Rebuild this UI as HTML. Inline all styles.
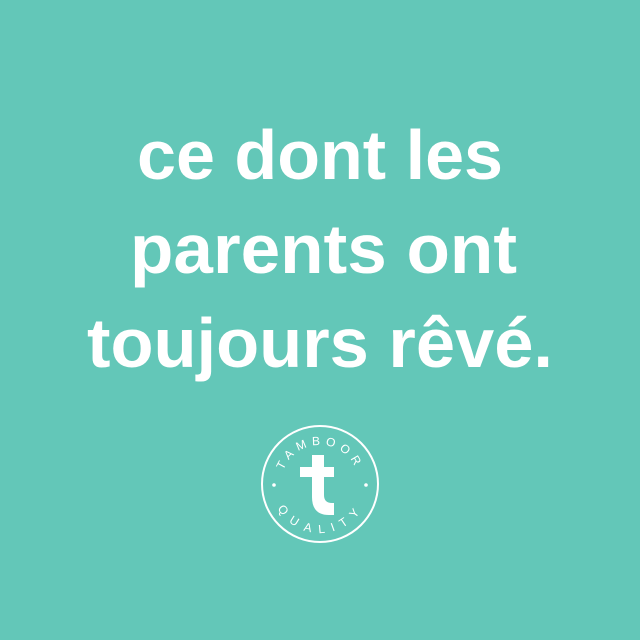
<!DOCTYPE html>
<html><head><meta charset="utf-8"><style>
html,body{margin:0;padding:0;background:#63c7b8;}
svg{display:block}
</style></head><body>
<svg width="640" height="640" viewBox="0 0 640 640" xmlns="http://www.w3.org/2000/svg">
<rect width="640" height="640" fill="#63c7b8"/>
<g fill="#fff" font-family="Liberation Sans, sans-serif" font-weight="bold" font-size="70">
<text x="137" y="179" textLength="366" lengthAdjust="spacingAndGlyphs">ce dont les</text>
<text x="130" y="273" textLength="387" lengthAdjust="spacingAndGlyphs">parents ont</text>
<text x="87" y="367" textLength="466" lengthAdjust="spacingAndGlyphs">toujours rêvé.</text>
</g>
<circle cx="320" cy="484" r="58" fill="none" stroke="#fff" stroke-width="2"/>
<circle cx="274" cy="485" r="1.8" fill="#fff"/>
<circle cx="366" cy="485" r="1.8" fill="#fff"/>
<defs>
<path id="top" d="M281,484 A39,39 0 0 1 359,484"/>
<path id="bot" d="M280,484 A40,40 0 0 0 360,484"/>
</defs>
<g fill="#fff" font-family="Liberation Sans, sans-serif" font-size="12" letter-spacing="5">
<text><textPath href="#top" startOffset="50%" text-anchor="middle">TAMBOOR</textPath></text>
<text dominant-baseline="hanging"><textPath href="#bot" startOffset="50%" text-anchor="middle">QUALITY</textPath></text>
</g>
<path d="M312,455 h12 v12 h10 v10 h-10 v18 q0,8 8,8 h2 v12 h-5 q-17,0 -17,-18 v-20 h-12 v-10 h12 z" fill="#fff"/>
</svg>
</body></html>
